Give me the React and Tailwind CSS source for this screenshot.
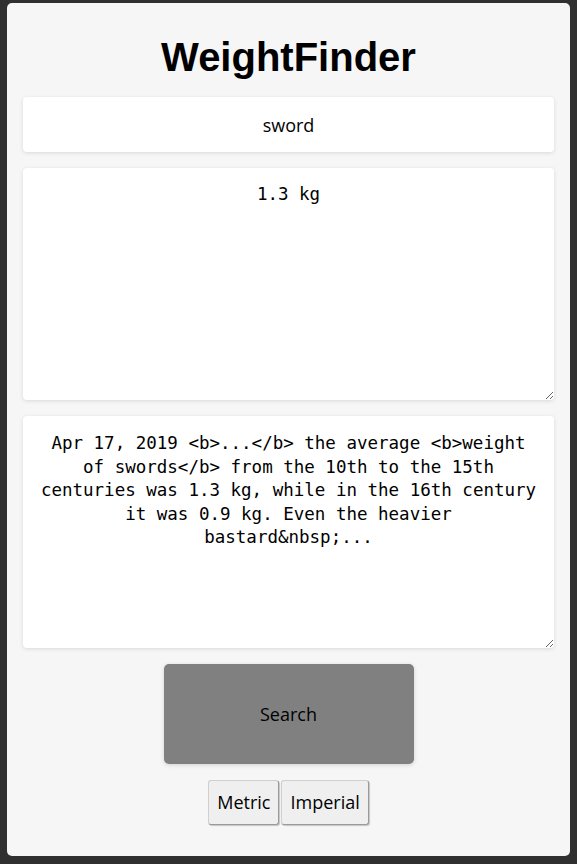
import React, { useState } from 'react';

const SNIPPET =
  'Apr 17, 2019 <b>...</b> the average <b>weight of swords</b> from the 10th to the 15th centuries was 1.3 kg, while in the 16th century it was 0.9 kg. Even the heavier bastard&nbsp;...';

export default function App() {
  const [query, setQuery] = useState('sword');
  const [unit, setUnit] = useState('metric');

  return (
    <div className="min-h-[864px] bg-[#303030] pt-[3px] px-[7px] pb-[8px]">
      <div className="bg-[#f6f6f6] rounded-[5px] pt-[31px] pb-[31px] px-[16px] flex flex-col items-center">
        <h1 className="font-['Liberation_Sans',Arial,sans-serif] font-bold text-[40px] leading-[46px] text-black">
          WeightFinder
        </h1>

        <input
          value={query}
          onChange={e => setQuery(e.target.value)}
          className="mt-[17px] w-full h-[55px] bg-white rounded-[4px] shadow-[0_1px_4px_rgba(0,0,0,0.12)] text-center text-[18px] font-['Open_Sans',sans-serif] text-black outline-none"
        />

        <textarea
          readOnly
          value={unit === 'metric' ? '1.3 kg' : '2.9 lb'}
          className="mt-[16px] w-full h-[232px] bg-white rounded-[4px] shadow-[0_1px_4px_rgba(0,0,0,0.12)] text-center text-[17.5px] leading-[23.5px] font-['DejaVu_Sans_Mono',monospace] text-black pt-[15px] px-[14px] outline-none"
        />

        <textarea
          readOnly
          value={SNIPPET}
          className="mt-[16px] w-full h-[232px] bg-white rounded-[4px] shadow-[0_1px_4px_rgba(0,0,0,0.12)] text-center text-[17.5px] leading-[23.5px] font-['DejaVu_Sans_Mono',monospace] text-black pt-[16px] px-[14px] outline-none"
        />

        <button className="mt-[16px] w-[250px] h-[100px] bg-[#808080] rounded-[5px] shadow-[0_1px_4px_rgba(0,0,0,0.15)] text-[18px] font-['Open_Sans',sans-serif] text-black">
          Search
        </button>

        <div className="mt-[16px] flex gap-[2px]">
          <button
            onClick={() => setUnit('metric')}
            className="h-[45px] px-[8px] bg-[#efefef] border border-[#cfcfcf] border-b-[#9a9a9a] border-r-[#9a9a9a] rounded-[3px] shadow-[1px_1px_1px_rgba(0,0,0,0.2)] text-[18px] font-['Open_Sans',sans-serif] text-black"
          >
            Metric
          </button>
          <button
            onClick={() => setUnit('imperial')}
            className="h-[45px] px-[8px] bg-[#efefef] border border-[#cfcfcf] border-b-[#9a9a9a] border-r-[#9a9a9a] rounded-[3px] shadow-[1px_1px_1px_rgba(0,0,0,0.2)] text-[18px] font-['Open_Sans',sans-serif] text-black"
          >
            Imperial
          </button>
        </div>
      </div>
    </div>
  );
}
